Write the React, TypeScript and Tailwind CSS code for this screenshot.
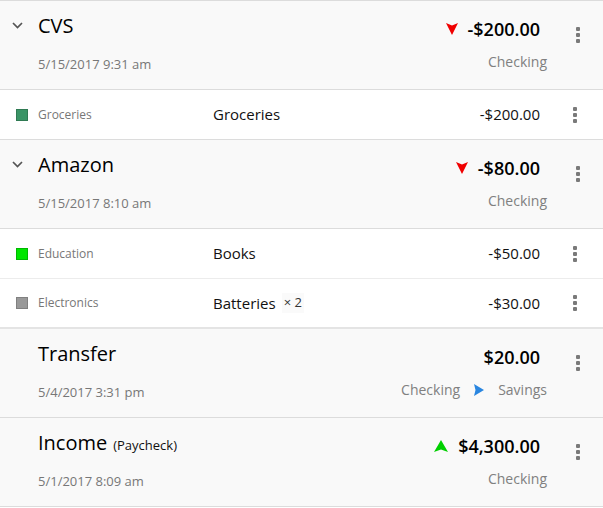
import React from 'react';

type Item = { color: string; border: string; category: string; description: string; qty?: number; amount: string };

type Txn = {
    title: string;
    note?: string;
    date: string;
    amount: string;
    direction?: 'down' | 'up';
    accounts: string[];
    expandable?: boolean;
    items?: Item[];
};

const txns: Txn[] = [
    {
        title: 'CVS',
        date: '5/15/2017 9:31 am',
        amount: '-$200.00',
        direction: 'down',
        accounts: ['Checking'],
        expandable: true,
        items: [{ color: '#3a9466', border: '#2f7a53', category: 'Groceries', description: 'Groceries', amount: '-$200.00' }],
    },
    {
        title: 'Amazon',
        date: '5/15/2017 8:10 am',
        amount: '-$80.00',
        direction: 'down',
        accounts: ['Checking'],
        expandable: true,
        items: [
            { color: '#00e600', border: '#00b800', category: 'Education', description: 'Books', amount: '-$50.00' },
            { color: '#999999', border: '#808080', category: 'Electronics', description: 'Batteries', qty: 2, amount: '-$30.00' },
        ],
    },
    {
        title: 'Transfer',
        date: '5/4/2017 3:31 pm',
        amount: '$20.00',
        accounts: ['Checking', 'Savings'],
    },
    {
        title: 'Income',
        note: '(Paycheck)',
        date: '5/1/2017 8:09 am',
        amount: '$4,300.00',
        direction: 'up',
        accounts: ['Checking'],
    },
];

const Kebab = () => (
    <div className="flex flex-col gap-[2px]">
        <span className="block w-[4px] h-[4px] rounded-[1px] bg-[#7a7a7a]" />
        <span className="block w-[4px] h-[4px] rounded-[1px] bg-[#7a7a7a]" />
        <span className="block w-[4px] h-[4px] rounded-[1px] bg-[#7a7a7a]" />
    </div>
);

const Arrow = ({ dir }: { dir: 'down' | 'up' | 'right' }) => {
    if (dir === 'down')
        return (
            <svg width="12" height="12" viewBox="0 0 12 12">
                <path d="M0 0 L6 2.5 L12 0 L6 12 Z" fill="#f00000" />
            </svg>
        );
    if (dir === 'up')
        return (
            <svg width="14" height="12" viewBox="0 0 14 12">
                <path d="M0 12 L7 9.5 L14 12 L7 0 Z" fill="#00d000" />
            </svg>
        );
    return (
        <svg width="10" height="12" viewBox="0 0 10 12">
            <path d="M0 0 L10 6 L0 12 L1.5 6 Z" fill="#2a86e0" />
        </svg>
    );
};

const Chevron = () => (
    <svg width="11" height="7" viewBox="0 0 11 7">
        <path d="M1 1 L5.5 5.5 L10 1" fill="none" stroke="#555" strokeWidth="1.7" />
    </svg>
);

export default function App() {
    return (
        <div className="w-[603px] bg-white border-t border-[#dcdcdc]" style={{ fontFamily: '"Open Sans", "Noto Sans", sans-serif' }}>
            {txns.map((t, ti) => (
                <div key={ti}>
                    {/* Header */}
                    <div className="h-[89px] bg-[#f9f9f9] border-b border-[#dcdcdc] flex">
                        <div className="w-[38px] flex justify-start pt-[21px] pl-[12px]">
                            {t.expandable && <Chevron />}
                        </div>
                        <div className="flex-1 flex flex-col pt-[11px]">
                            <div className="flex items-baseline gap-[6px] h-[28px]">
                                <span className="text-[20px] leading-[28px] text-black">{t.title}</span>
                                {t.note && <span className="text-[13px] text-[#111]">{t.note}</span>}
                            </div>
                            <div className="mt-[15px] text-[13px] leading-[18px] text-[#777]">{t.date}</div>
                        </div>
                        <div className="flex flex-col items-end pt-[16px]">
                            <div className="flex items-center gap-[10px] pr-[7px] h-[24px]">
                                {t.direction && <Arrow dir={t.direction} />}
                                <span className="text-[18px] leading-[24px] font-semibold text-black">{t.amount}</span>
                            </div>
                            <div className="mt-[11px] flex items-center gap-[14px] text-[14px] leading-[20px] text-[#808080]">
                                {t.accounts.map((a, ai) => (
                                    <React.Fragment key={ai}>
                                        {ai > 0 && <Arrow dir="right" />}
                                        <span>{a}</span>
                                    </React.Fragment>
                                ))}
                            </div>
                        </div>
                        <div className="w-[56px] flex justify-center pt-[26px] pl-[5px]">
                            <Kebab />
                        </div>
                    </div>
                    {/* Line items */}
                    {t.items?.map((it, ii) => {
                        const last = ii === (t.items?.length ?? 0) - 1;
                        const borderCls = !last
                            ? 'border-b border-[#ececec]'
                            : ti === 1
                              ? 'border-b-2 border-[#e4e4e4]'
                              : 'border-b border-[#dcdcdc]';
                        return (
                            <div key={ii} className={`h-[50px] bg-white flex items-center ${borderCls}`}>
                                <div className="w-[38px] flex justify-end pr-[10px]">
                                    <span
                                        className="block w-[12px] h-[12px] border"
                                        style={{ backgroundColor: it.color, borderColor: it.border }}
                                    />
                                </div>
                                <div className="w-[175px] text-[12px] text-[#777]">{it.category}</div>
                                <div className="flex-1 flex items-center gap-[6px] text-[15px] text-[#111]">
                                    <span>{it.description}</span>
                                    {it.qty && <span className="text-[13px] text-[#333] bg-[#fafafa] px-[2px]">× {it.qty}</span>}
                                </div>
                                <div className="text-[15px] text-[#111] pr-[7px]">{it.amount}</div>
                                <div className="w-[56px] flex justify-center">
                                    <Kebab />
                                </div>
                            </div>
                        );
                    })}
                </div>
            ))}
        </div>
    );
}
